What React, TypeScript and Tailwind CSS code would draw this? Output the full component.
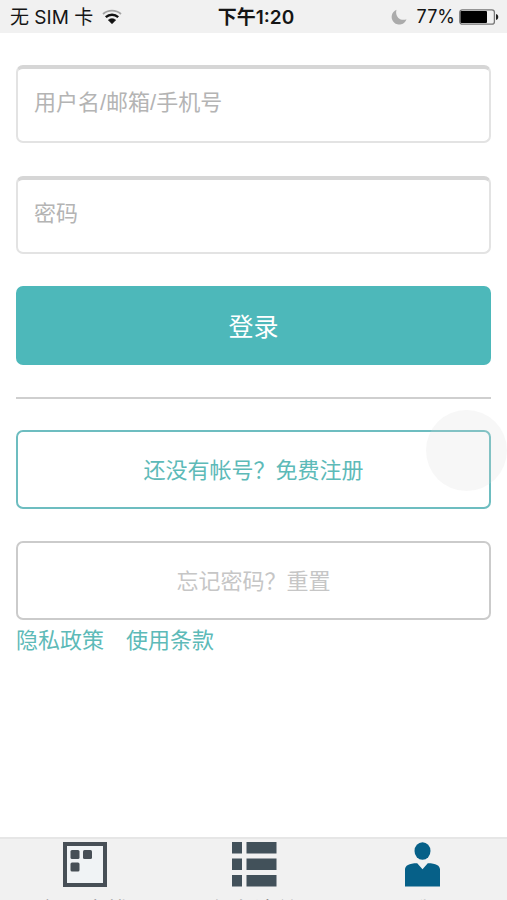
import React from 'react';

const tabs = [
  { label: '每日安排', icon: <BoardIcon />, width: 'w-[170px]' },
  { label: '任务清单', icon: <ListIcon />, width: 'w-[168px]' },
  { label: '我', icon: <UserIcon />, width: 'w-[169px]' },
];

function WifiIcon() {
  return (
    <svg width="20" height="16" viewBox="0 0 20 16" fill="none">
      <path d="M1 5C6 .6 14 .6 19 5" stroke="#a3a3a3" strokeWidth="1.8" />
      <path d="M3.8 8.200C7.4 4.900 12.6 4.900 16.2 8.200" stroke="#111" strokeWidth="2.4" />
      <path d="M6.3 11C8.4 9.2 11.6 9.2 13.7 11L10 14.8Z" fill="#111" stroke="#111" strokeWidth=".6" />
    </svg>
  );
}

function MoonIcon() {
  return (
    <svg width="16" height="16" viewBox="0 0 16 16">
      <path d="M5.500 .8A7.600 7.600 0 1 0 15.500 10.200C10 12.500 3.500 8 5.500 .8Z" fill="#ababab" />
    </svg>
  );
}

function BatteryIcon() {
  return (
    <svg width="40" height="16" viewBox="0 0 40 16">
      <rect x=".8" y=".8" width="34.6" height="14.4" rx="2.5" fill="none" stroke="#777" strokeWidth="1.3" />
      <rect x="1.500" y="2" width="26.500" height="12" rx="1" fill="#000" />
      <path d="M37 5c3 .5 3 5.500 0 6z" fill="#222" />
    </svg>
  );
}

function BoardIcon() {
  return (
    <svg width="44" height="45" viewBox="0 0 44 45" fill="#474f56">
      <rect x="2" y="2" width="40" height="41" fill="#f0f3f5" stroke="#474f56" strokeWidth="4" />
      <rect x="7.500" y="8" width="9" height="9" rx="1.500" />
      <rect x="20" y="8" width="9" height="9" rx="1.500" />
      <rect x="7.500" y="20.500" width="9" height="9" rx="1.500" />
    </svg>
  );
}

function ListIcon() {
  return (
    <svg width="45" height="45" viewBox="0 0 45 45" fill="#42515a">
      <path d="M0 0h10v11.500H0zM14.500 0h30v11.500h-30zM0 16.500h10v11.500H0zM14.500 16.500h30v11.500h-30zM0 33h10v11.500H0zM14.500 33h30v11.500h-30z" />
    </svg>
  );
}

function UserIcon() {
  return (
    <svg width="35" height="45" viewBox="0 0 35 45" fill="#066088">
      <ellipse cx="17.500" cy="9" rx="8" ry="8.800" />
      <path d="M0 44.500V27.500C0 23.500 4 21.200 12.200 21.200L17.500 27.200L22.800 21.200C31 21.200 35 23.500 35 27.500V44.500Z" />
    </svg>
  );
}

function Field({ placeholder, type }: { placeholder: string; type: string }) {
  return (
    <div className="h-[78px] overflow-hidden rounded-[7px] border-2 border-t-4 border-[#e3e3e3] border-t-[#d6d6d6]">
      <input
        type={type}
        placeholder={placeholder}
        className="block h-[67px] w-full bg-transparent px-4 font-['Liberation_Sans','Noto_Sans_CJK_SC',sans-serif] text-[22px] outline-none placeholder:text-[#b4b4b4]"
      />
    </div>
  );
}

export default function App() {
  return (
    <div className="relative flex h-[900px] w-full flex-col overflow-hidden bg-white font-['Noto_Sans_CJK_SC',sans-serif]">
      {/* Status bar */}
      <header className="grid h-[33px] shrink-0 grid-cols-[1fr_auto_1fr] items-center bg-[#f1f1f1] pr-2 pl-[10px] text-[19px] leading-none text-[#151515]">
        <div className="flex items-center gap-[9px] pt-px">
          <span className="font-['Inter','Noto_Sans_CJK_SC',sans-serif]">无 SIM 卡</span>
          <WifiIcon />
        </div>
        <span className="pt-px pl-[3px] font-['Inter','Noto_Sans_CJK_SC',sans-serif] font-semibold">下午1:20</span>
        <div className="flex items-center justify-end pt-px font-['Inter',sans-serif] text-[18px]">
          <MoonIcon />
          <span className="mr-1 ml-[10px]">77%</span>
          <BatteryIcon />
        </div>
      </header>

      {/* Login form */}
      <main className="flex flex-1 flex-col px-4 pt-8">
        <form className="flex flex-col">
          <Field placeholder="用户名/邮箱/手机号" type="text" />
          <div className="mt-[33px] mb-8">
            <Field placeholder="密码" type="password" />
          </div>
          <button type="button" className="h-[79px] rounded-[7px] bg-[#4db8ba] text-[25px] text-white">
            登录
          </button>
        </form>
        <hr className="mt-8 mb-[31px] border-t-2 border-[#cfcfcf]" />
        <button type="button" className="h-[79px] rounded-[7px] border-2 border-[#6dbdc0] pb-[2px] text-[22px] text-[#5dbab8]">
          还没有帐号？免费注册
        </button>
        <button type="button" className="mt-8 h-[79px] rounded-[7px] border-2 border-[#cbcbcb] pb-[2px] text-[22px] text-[#c6c6c6]">
          忘记密码？重置
        </button>
        <div className="flex gap-[22px] pt-[2px] text-[22px] leading-8 text-[#5dbab8]">
          <a href="#">隐私政策</a>
          <a href="#">使用条款</a>
        </div>
      </main>

      {/* Tab bar, labels run past the bottom edge */}
      <nav className="flex h-[63px] shrink-0 overflow-hidden border-t-2 border-[#e6e6e6] bg-[#f1f1f1]">
        {tabs.map((tab) => (
          <a key={tab.label} href="#" className={`flex shrink-0 flex-col items-center pt-[3px] ${tab.width}`}>
            <span className="h-[46px]">{tab.icon}</span>
            <span className="mt-[8px] text-[22px] leading-[26px] whitespace-nowrap text-[#777]">{tab.label}</span>
          </a>
        ))}
      </nav>

      {/* Floating assistive button */}
      <div className="absolute top-[410px] left-[426px] h-[81px] w-[81px] rounded-full bg-[#d8d8d8]/20" />
    </div>
  );
}
